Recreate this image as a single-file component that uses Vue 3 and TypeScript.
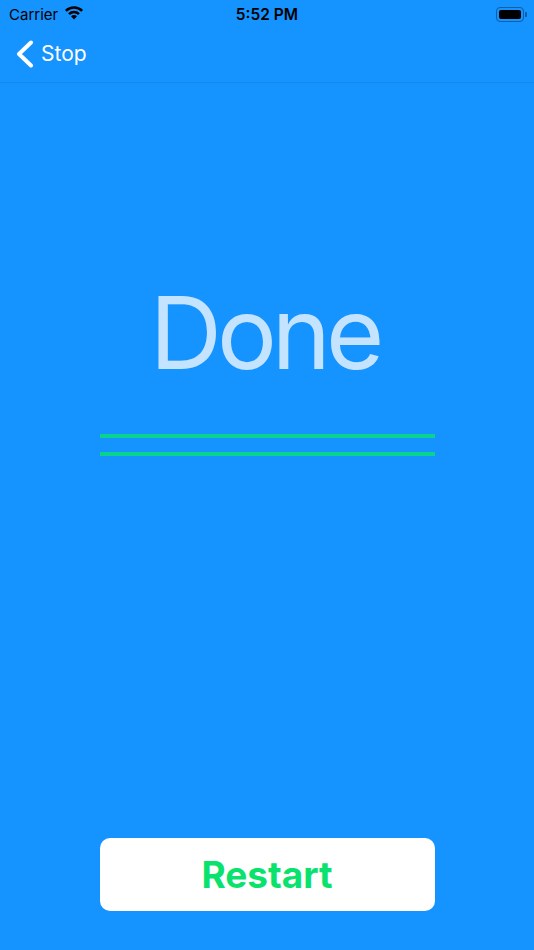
<script setup lang="ts">
const lines = [0, 1];
</script>

<template>
	<div class="screen">
		<div class="status-bar">
			<div class="status-left">
				<span class="carrier">Carrier</span>
				<svg class="wifi" width="20" height="15" viewBox="0 0 20 15">
					<path class="wifi-arc" d="M1.870 5.870A11.500 11.500 0 0 1 18.130 5.870" />
					<path class="wifi-arc" d="M5.050 9.050A7 7 0 0 1 14.950 9.050" />
					<path d="M10 14.500 7 11.200A4.200 4.200 0 0 1 13 11.200Z" />
				</svg>
			</div>
			<span class="time">5:52 PM</span>
			<div class="battery">
				<div class="battery-body"><div class="battery-fill"></div></div>
				<div class="battery-cap"></div>
			</div>
		</div>

		<div class="nav-bar">
			<svg class="chevron" width="18" height="28" viewBox="0 0 18 28">
				<path d="M15 2.500 3 14 15 25.500" />
			</svg>
			<span class="nav-label">Stop</span>
		</div>

		<div class="content">
			<h1 class="title">Done</h1>
			<div class="lines">
				<div v-for="line in lines" :key="line" class="line"></div>
			</div>
			<button class="restart" type="button">Restart</button>
		</div>
	</div>
</template>

<style>
html,
body {
	margin: 0;
	background: #1593ff;
}
</style>

<style scoped>
.screen {
	display: flex;
	flex-direction: column;
	width: 534px;
	height: 950px;
	overflow: hidden;
	background: #1593ff;
	font-family: Inter, "Liberation Sans", sans-serif;
}

.status-bar {
	display: flex;
	flex: none;
	align-items: center;
	justify-content: space-between;
	position: relative;
	height: 28px;
	padding: 0 7px 0 9px;
	color: #000;
}

.status-left {
	display: flex;
	align-items: center;
	gap: 6px;
}

.carrier {
	font-size: 15px;
}

.wifi {
	fill: #000;
	margin-top: -3px;
}

.wifi-arc {
	fill: none;
	stroke: #000;
	stroke-width: 2.6;
}

.time {
	position: absolute;
	left: 0;
	right: 0;
	text-align: center;
	font-size: 15.5px;
	font-weight: 600;
}

.battery {
	display: flex;
	align-items: center;
	gap: 1px;
}

.battery-body {
	box-sizing: border-box;
	width: 28px;
	height: 15px;
	padding: 2px;
	border: 1px solid #0d5ea3;
	border-radius: 4px;
}

.battery-fill {
	height: 100%;
	background: #000;
	border-radius: 2px;
}

.battery-cap {
	width: 2px;
	height: 5px;
	background: #0d5ea3;
	border-radius: 0 1px 1px 0;
}

.nav-bar {
	display: flex;
	flex: none;
	align-items: center;
	gap: 7px;
	box-sizing: border-box;
	height: 55px;
	padding: 0 0 3px 16px;
	border-bottom: 1px solid #1488ec;
}

.chevron {
	fill: none;
	stroke: #fff;
	stroke-width: 4;
	stroke-linecap: round;
	stroke-linejoin: round;
}

.nav-label {
	color: #fff;
	font-size: 21px;
}

.content {
	display: flex;
	flex: 1;
	flex-direction: column;
	align-items: center;
}

.title {
	margin: 189px 5px 0 0;
	color: #c4e3ff;
	font-size: 100px;
	font-weight: 400;
	letter-spacing: -5px;
	line-height: 121px;
}

.lines {
	display: flex;
	flex-direction: column;
	gap: 14px;
	width: 335px;
	margin-top: 41px;
}

.line {
	height: 4px;
	background: #0ad28f;
}

.restart {
	width: 335px;
	height: 73px;
	margin-top: auto;
	margin-bottom: 39px;
	border: 0;
	border-radius: 10px;
	background: #fff;
	color: #0ae26e;
	font-family: inherit;
	font-size: 37px;
	font-weight: 700;
}
</style>
